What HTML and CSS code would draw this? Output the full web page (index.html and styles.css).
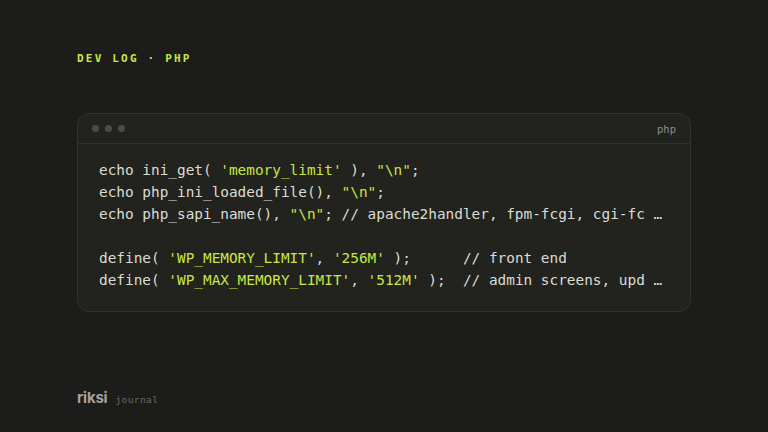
FILE: index.html
```html
<!DOCTYPE html>
<html>
<head>
<meta charset="utf-8">
<link rel="stylesheet" href="styles.css">
</head>
<body>
<div class="page">
  <div class="eyebrow">DEV LOG · PHP</div>
  <div class="card">
    <div class="card-head">
      <div class="dots"><span class="dot"></span><span class="dot"></span><span class="dot"></span></div>
      <div class="lang">php</div>
    </div>
    <div class="code">
      <div class="line">echo ini_get( <span class="s">'memory_limit'</span> ), <span class="s">"\n"</span>;</div>
      <div class="line">echo php_ini_loaded_file(), <span class="s">"\n"</span>;</div>
      <div class="line">echo php_sapi_name(), <span class="s">"\n"</span>; // apache2handler, fpm-fcgi, cgi-fc …</div>
      <div class="line"> </div>
      <div class="line">define( <span class="s">'WP_MEMORY_LIMIT'</span>, <span class="s">'256M'</span> );      // front end</div>
      <div class="line">define( <span class="s">'WP_MAX_MEMORY_LIMIT'</span>, <span class="s">'512M'</span> );  // admin screens, upd …</div>
    </div>
  </div>
  <div class="footer"><span class="brand">riksi</span><span class="sub">journal</span></div>
</div>
</body>
</html>
```
FILE: styles.css
```css
html, body {
  margin: 0;
  padding: 0;
  background: #1c1c1a;
}
.page {
  width: 768px;
  height: 432px;
  box-sizing: border-box;
  padding: 52px 77px 0 77px;
  display: flex;
  flex-direction: column;
}
.eyebrow {
  font-family: "DejaVu Sans Mono", monospace;
  font-weight: bold;
  font-size: 11px;
  line-height: 14px;
  letter-spacing: 2.2px;
  color: #c8e646;
}
.card {
  margin-top: 47px;
  background: #22231f;
  border: 1px solid #31332d;
  border-radius: 12px;
  overflow: hidden;
}
.card-head {
  height: 29px;
  border-bottom: 1px solid #30322c;
  display: flex;
  align-items: center;
  justify-content: space-between;
  padding: 0 14px 0 14px;
}
.dots {
  display: flex;
  gap: 6px;
}
.dot {
  width: 7px;
  height: 7px;
  border-radius: 50%;
  background: #4a4b46;
}
.lang {
  font-family: "DejaVu Sans Mono", monospace;
  font-size: 10.5px;
  color: #8b8c86;
}
.code {
  padding: 15px 22px 20px 21px;
  font-family: "DejaVu Sans Mono", monospace;
  font-size: 14.4px;
  line-height: 22px;
  color: #dcdcd4;
}
.line {
  white-space: pre;
  height: 22px;
}
.s {
  color: #c8e646;
}
.footer {
  margin-top: auto;
  margin-bottom: 25px;
  display: flex;
  align-items: baseline;
  gap: 8px;
}
.brand {
  font-family: "Inter", sans-serif;
  font-weight: bold;
  font-size: 15px;
  color: #a3a39e;
  letter-spacing: -0.2px;
}
.sub {
  font-family: "DejaVu Sans Mono", monospace;
  font-size: 9.5px;
  color: #6b6c67;
  letter-spacing: 0.4px;
}
```
